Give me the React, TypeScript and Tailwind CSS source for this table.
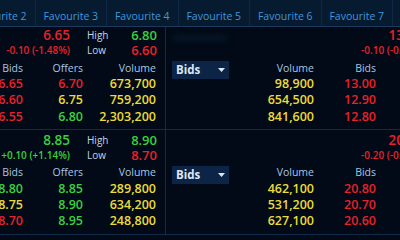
const tabs = ['Favourite 2', 'Favourite 3', 'Favourite 4', 'Favourite 5', 'Favourite 6', 'Favourite 7'];

const RED = 'text-[#e8212a]';
const GREEN = 'text-[#3ccf3c]';
const YELLOW = 'text-[#ecdc3a]';

type Cell = { v: string; c: string };

const blocks = [
  {
    price: '6.65',
    change: '-0.10 (-1.48%)',
    tone: RED,
    high: { v: '6.80', c: GREEN },
    low: { v: '6.60', c: RED },
    rows: [
      [{ v: '6.65', c: RED }, { v: '6.70', c: RED }, { v: '673,700', c: YELLOW }],
      [{ v: '6.60', c: RED }, { v: '6.75', c: YELLOW }, { v: '759,200', c: YELLOW }],
      [{ v: '6.55', c: RED }, { v: '6.80', c: GREEN }, { v: '2,303,200', c: YELLOW }],
    ] as Cell[][],
    right: {
      price: '13.10',
      change: '-0.10 (-0.76%)',
      rows: [
        ['98,900', '13.00'],
        ['654,500', '12.90'],
        ['841,600', '12.80'],
      ],
    },
  },
  {
    price: '8.85',
    change: '+0.10 (+1.14%)',
    tone: GREEN,
    high: { v: '8.90', c: GREEN },
    low: { v: '8.70', c: RED },
    rows: [
      [{ v: '8.80', c: GREEN }, { v: '8.85', c: GREEN }, { v: '289,800', c: YELLOW }],
      [{ v: '8.75', c: YELLOW }, { v: '8.90', c: GREEN }, { v: '634,200', c: YELLOW }],
      [{ v: '8.70', c: RED }, { v: '8.95', c: GREEN }, { v: '248,800', c: YELLOW }],
    ] as Cell[][],
    right: {
      price: '20.90',
      change: '-0.20 (-0.95%)',
      rows: [
        ['462,100', '20.80'],
        ['531,200', '20.70'],
        ['627,100', '20.60'],
      ],
    },
  },
];

function Dropdown() {
  return (
    <div className="ml-[6px] w-[57px] h-[18px] shrink-0 bg-[#0c2445] flex items-center justify-between pl-[4px] pr-[4px]">
      <span className="text-[11.5px] font-bold text-[#dde7f4]">Bids</span>
      <svg width="7" height="4" viewBox="0 0 7 4">
        <path d="M0 0 L7 0 L3.5 4 Z" fill="#dde7f4" />
      </svg>
    </div>
  );
}

export default function App() {
  return (
    <div
      className="w-[400px] h-[240px] overflow-hidden bg-[#010a16] whitespace-nowrap"
      style={{ fontFamily: '"Open Sans", "Noto Sans", sans-serif' }}
    >
      {/* Tab strip */}
      <div className="h-[27px] bg-[#061a30] border-b border-[#1d3a5c] flex">
        <div className="flex -ml-[36px]">
          {tabs.map((t) => (
            <div
              key={t}
              className="w-[71.5px] shrink-0 border-r border-[#0f2846] pt-[9px] text-center text-[10.5px] leading-[14px] font-medium text-[#3f98de]"
            >
              {t}
            </div>
          ))}
        </div>
      </div>

      {blocks.map((b, bi) => (
        <div
          key={bi}
          className={`flex border-b border-[#132a48] ${bi === 0 ? 'h-[103px]' : 'h-[105px]'}`}
        >
          {/* Left quote panel */}
          <div className={`w-[166px] shrink-0 border-r border-[#132a48] ${bi === 0 ? 'pt-[1px]' : 'pt-[3px]'}`}>
            <div className="flex">
              <div className={`w-[70px] text-right ${b.tone} font-semibold`}>
                <div className="text-[13.5px] leading-[15px]">{b.price}</div>
                <div className="text-[10px] leading-[14px]">{b.change}</div>
              </div>
              <div className="ml-[17px] w-[34px] text-[10px] font-medium text-[#c6d4e4]">
                <div className="leading-[15px]">High</div>
                <div className="leading-[14px]">Low</div>
              </div>
              <div className="w-[36px] text-right text-[13px] font-semibold">
                <div className={`leading-[15px] ${b.high.c}`}>{b.high.v}</div>
                <div className={`leading-[14px] ${b.low.c}`}>{b.low.v}</div>
              </div>
            </div>

            <div className={`grid grid-cols-[23px_60px_73px] text-right ${bi === 0 ? 'mt-[4px]' : 'mt-[3px]'}`}>
              {['Bids', 'Offers', 'Volume'].map((h) => (
                <div key={h} className="h-[14px] leading-[14px] text-[10.5px] font-medium text-[#a9c5e2]">
                  {h}
                </div>
              ))}
            </div>
            <div className={bi === 0 ? 'mt-[0.5px]' : 'mt-[2px]'}>
              {b.rows.map((r, ri) => (
                <div
                  key={ri}
                  className={`grid grid-cols-[23px_60px_73px] text-right text-[12.5px] font-semibold ${bi === 0 ? 'h-[16.5px] leading-[16.5px]' : 'h-[16px] leading-[16px]'}`}
                >
                  {r.map((c, ci) => (
                    <div key={ci} className={`${c.c} flex justify-end`}>
                      {c.v}
                    </div>
                  ))}
                </div>
              ))}
            </div>
          </div>

          {/* Right quote panel */}
          <div className={`flex-1 relative ${bi === 0 ? 'pt-[1px]' : 'pt-[3px]'}`}>
            {bi === 0 && (
              <div className="absolute left-[6px] top-[8px] w-[56px] h-[6px] rounded-sm bg-[#081729] blur-[3px]" />
            )}
            <div className="pl-[195px] flex">
              <div className={`w-[62px] text-right ${RED} font-semibold`}>
                <div className="text-[13.5px] leading-[15px]">{b.right.price}</div>
                <div className="text-[10px] leading-[14px]">{b.right.change}</div>
              </div>
            </div>
            <div className={`flex h-[14px] items-start ${bi === 0 ? 'mt-[4px]' : 'mt-[3px]'}`}>
              <div className={bi === 0 ? '' : 'mt-[1px]'}>
                <Dropdown />
              </div>
              <div className="w-[85px] text-right text-[10.5px] leading-[14px] font-medium text-[#a9c5e2]">Volume</div>
              <div className="w-[62px] text-right text-[10.5px] leading-[14px] font-medium text-[#a9c5e2]">Bids</div>
            </div>
            <div className={bi === 0 ? 'mt-[0.5px]' : 'mt-[2px]'}>
              {b.right.rows.map((r, ri) => (
                <div
                  key={ri}
                  className={`flex text-right text-[12.5px] font-semibold ${bi === 0 ? 'h-[16.5px] leading-[16.5px]' : 'h-[16px] leading-[16px]'}`}
                >
                  <div className={`ml-[63px] w-[85px] ${YELLOW}`}>{r[0]}</div>
                  <div className={`w-[62px] ${RED}`}>{r[1]}</div>
                </div>
              ))}
            </div>
          </div>
        </div>
      ))}
    </div>
  );
}
